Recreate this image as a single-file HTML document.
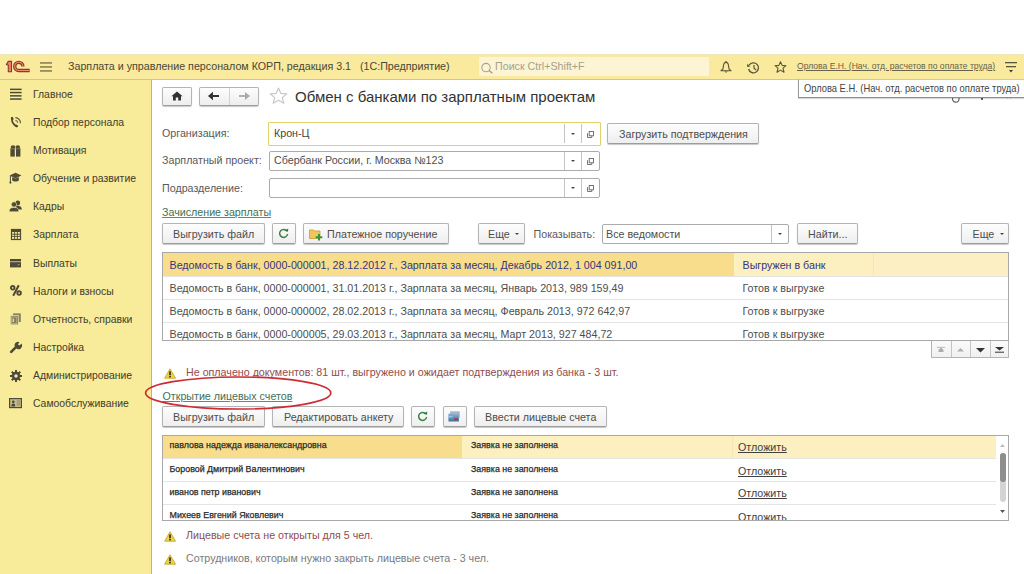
<!DOCTYPE html>
<html><head><meta charset="utf-8">
<style>
*{box-sizing:border-box;margin:0;padding:0}
html,body{width:1024px;height:574px;overflow:hidden;background:#fff}
body{position:relative;font-family:"Liberation Sans",sans-serif;font-size:10.7px;color:#4d4d4d}
.a{position:absolute;white-space:nowrap;line-height:1}
#top{position:absolute;left:0;top:54px;width:1024px;height:26px;background:#f9ea9e;border-top:1px solid #ede5bb;border-bottom:1px solid #d6c67e}
#side{position:absolute;left:0;top:80px;width:152px;height:494px;background:#f8ec9b;border-right:1px solid #beb37c}
.si{position:absolute;left:33px;font-size:10.4px;color:#45422f;line-height:1;white-space:nowrap;-webkit-text-stroke:0.05px #45422f}
svg{position:absolute;overflow:visible}
.btn{position:absolute;border:1px solid #b4b4b4;border-bottom-color:#9c9c9c;border-radius:2px;background:linear-gradient(#fdfdfd,#eeeeee);box-shadow:0 1px 1px rgba(0,0,0,.22)}
.bt{position:absolute;line-height:1;white-space:nowrap;color:#4d4d4d}
.inp{position:absolute;border:1px solid #ababab;border-radius:2px;background:#fff}
.lbl{position:absolute;line-height:1;white-space:nowrap;color:#595959}
.tbl{position:absolute;border:1px solid #a8a8a8;background:#fff;overflow:hidden}
.ln{position:absolute;height:1px;background:#e4e4e4}
.warn{position:absolute;line-height:1;white-space:nowrap;color:#914c4c}
.lnk{position:absolute;line-height:1;white-space:nowrap;color:#3f6f58;text-decoration:underline;text-decoration-color:#3f9f6c}
.b8{position:absolute;line-height:1;white-space:nowrap;color:#2a2a2a;font-size:8.9px;-webkit-text-stroke:0.25px #2a2a2a}
.otl{position:absolute;line-height:1;white-space:nowrap;color:#404040;text-decoration:underline}
</style></head><body>

<!-- ===== TOP BAR ===== -->
<div id="top"></div>
<!-- 1C logo -->
<svg style="left:6px;top:61px" width="24" height="12" viewBox="0 0 24 12">
  <path d="M0.5 3.4 L2.3 0.4 L5.5 0.4 L5.5 10.8 L2.3 10.8 L2.3 4.2 Z" fill="#f08070" stroke="#8c3a22" stroke-width="1.1"/>
  <path d="M16.9 5.4 A4.1 4.1 0 1 0 12.8 9.5 L23.7 9.5" fill="none" stroke="#8c3a22" stroke-width="3.3"/>
  <path d="M16.9 5.4 A4.1 4.1 0 1 0 12.8 9.5 L23.7 9.5" fill="none" stroke="#f08a78" stroke-width="1.1"/>
</svg>
<!-- hamburger -->
<svg style="left:40px;top:62px" width="12" height="10" viewBox="0 0 12 10">
  <rect x="0" y="0.3" width="12" height="1.3" fill="#6f6a45"/>
  <rect x="0" y="4.3" width="12" height="1.3" fill="#6f6a45"/>
  <rect x="0" y="8.3" width="12" height="1.3" fill="#6f6a45"/>
</svg>
<div class="a" style="left:68px;top:61px;color:#4a4736">Зарплата и управление персоналом КОРП, редакция 3.1</div>
<div class="a" style="left:360px;top:61px;color:#4a4736">(1С:Предприятие)</div>
<!-- search -->
<div style="position:absolute;left:479px;top:57px;width:230px;height:19px;background:#fcf4d4"></div>
<svg style="left:481px;top:62.5px" width="12" height="10" viewBox="0 0 12 10">
  <circle cx="5" cy="4.6" r="4.2" fill="none" stroke="#a9a488" stroke-width="1.1"/>
  <path d="M8 7.6 L11.4 10.2" stroke="#a9a488" stroke-width="1.5"/>
</svg>
<div class="a" style="left:495px;top:61px;color:#a5a18a">Поиск Ctrl+Shift+F</div>
<!-- bell -->
<svg style="left:719.5px;top:61px" width="12" height="12" viewBox="0 0 12 12">
  <path d="M6 1.4 C4.3 1.4 3.6 3.2 3.4 5.2 L3 7.8 L1 9.7 L11 9.7 L9 7.8 L8.6 5.2 C8.4 3.2 7.7 1.4 6 1.4 Z" fill="none" stroke="#5a5438" stroke-width="1.1" stroke-linejoin="round"/>
  <circle cx="6" cy="0.9" r="0.8" fill="#5a5438"/>
  <path d="M4.4 10.6 Q6 12.4 7.6 10.6 Z" fill="#4a4530"/>
</svg>
<!-- history -->
<svg style="left:747px;top:62px" width="13" height="12" viewBox="0 0 13 12">
  <path d="M2.2 3.2 A5 5 0 1 1 1.6 7" fill="none" stroke="#5a563e" stroke-width="1.3"/>
  <path d="M0.2 1.8 L3.4 4.4 L0.2 5 Z" fill="#5a563e"/>
  <path d="M7 3 L7 6.3 L9.2 8" fill="none" stroke="#5a563e" stroke-width="1.2"/>
</svg>
<!-- star top -->
<svg style="left:774px;top:61px" width="13" height="12" viewBox="0 0 13 12">
  <path d="M6.5 0.8 L8.1 4.4 L12 4.7 L9 7.2 L10 11.2 L6.5 9.1 L3 11.2 L4 7.2 L1 4.7 L4.9 4.4 Z" fill="none" stroke="#5a563e" stroke-width="1.1" stroke-linejoin="round"/>
</svg>
<div class="a" style="left:797px;top:62px;font-size:8.6px;color:#67624a;text-decoration:underline">Орлова Е.Н. (Нач. отд. расчетов по оплате труда)</div>
<!-- menu icon -->
<svg style="left:1005px;top:62px" width="12" height="11" viewBox="0 0 12 11">
  <rect x="0" y="0" width="12" height="1.3" fill="#5a563e"/>
  <rect x="1" y="4" width="10" height="1.3" fill="#5a563e"/>
  <path d="M4 8 L8 8 L6 10.5 Z" fill="#3b3a2e"/>
</svg>

<!-- ===== SIDEBAR ===== -->
<div id="side"></div>
<div class="si" style="top:90px">Главное</div>
<div class="si" style="top:118px">Подбор персонала</div>
<div class="si" style="top:146px">Мотивация</div>
<div class="si" style="top:174px">Обучение и развитие</div>
<div class="si" style="top:202px">Кадры</div>
<div class="si" style="top:230px">Зарплата</div>
<div class="si" style="top:258.5px">Выплаты</div>
<div class="si" style="top:286.5px">Налоги и взносы</div>
<div class="si" style="top:314.5px">Отчетность, справки</div>
<div class="si" style="top:342.5px">Настройка</div>
<div class="si" style="top:370.5px">Администрирование</div>
<div class="si" style="top:398.5px">Самообслуживание</div>
<!-- sidebar icons -->
<svg style="left:10px;top:88px" width="12" height="12" viewBox="0 0 12 12">
  <rect x="0" y="0.6" width="11.6" height="1.5" fill="#4e4a36"/>
  <rect x="0" y="3.8" width="11.6" height="1.5" fill="#4e4a36"/>
  <rect x="0" y="7.1" width="11.6" height="1.5" fill="#4e4a36"/>
  <rect x="0" y="10.3" width="11.6" height="1.5" fill="#4e4a36"/>
</svg>
<svg style="left:10px;top:116px" width="12" height="12" viewBox="0 0 12 12">
  <path d="M2 2 Q1.2 7.6 6.8 10.4" fill="none" stroke="#4e4a36" stroke-width="1.6" stroke-linecap="round"/>
  <ellipse cx="2.2" cy="2.6" rx="1.3" ry="1.6" fill="#4e4a36" transform="rotate(-20 2.2 2.6)"/>
  <ellipse cx="6.4" cy="9.8" rx="1.7" ry="1.2" fill="#4e4a36" transform="rotate(20 6.4 9.8)"/>
  <path d="M5.4 1.6 A5.2 5.2 0 0 1 10.4 7.2" fill="none" stroke="#5a5640" stroke-width="1.2"/>
  <path d="M5.4 4.2 A2.6 2.6 0 0 1 7.6 6.6" fill="none" stroke="#5a5640" stroke-width="1.1"/>
</svg>
<svg style="left:10px;top:144.5px" width="11" height="12" viewBox="0 0 11 12">
  <g fill="#4e4a36">
  <ellipse cx="3" cy="1.9" rx="2.3" ry="1.7"/><ellipse cx="7.8" cy="1.9" rx="2.3" ry="1.7"/>
  <rect x="0.4" y="3.2" width="4.4" height="8.4"/><rect x="6" y="3.2" width="4.4" height="8.4"/>
  </g>
  <rect x="0.4" y="3.6" width="10" height="0.6" fill="#8a8460"/>
</svg>
<svg style="left:9px;top:172px" width="13" height="12" viewBox="0 0 13 12">
  <path d="M0.5 3.5 L6.5 0.8 L12.5 3.5 L6.5 6.2 Z" fill="#4e4a36"/>
  <path d="M3.2 5 L3.2 8.4 C4.6 9.8 8.4 9.8 9.8 8.4 L9.8 5 L6.5 6.6 Z" fill="#4e4a36"/>
  <path d="M1.4 4 L1.4 10" stroke="#4e4a36" stroke-width="1"/>
  <circle cx="1.4" cy="10.6" r="1.1" fill="#4e4a36"/>
</svg>
<svg style="left:9px;top:200px" width="13" height="12" viewBox="0 0 13 12">
  <circle cx="8.8" cy="3" r="2.4" fill="#4e4a36"/>
  <path d="M6.4 6.4 C7.8 5.6 10 5.6 11.4 6.4 C12.6 7.2 12.8 8.6 12.8 9.6 L9 9.6 Z" fill="#4e4a36"/>
  <circle cx="5" cy="4.4" r="2.6" fill="#4e4a36" stroke="#f8ec9b" stroke-width="0.6"/>
  <path d="M0.2 11.8 C0.2 8.6 1.6 7.4 5 7.4 C8.4 7.4 9.8 8.6 9.8 11.8 Z" fill="#4e4a36" stroke="#f8ec9b" stroke-width="0.6"/>
</svg>
<svg style="left:10.5px;top:229px" width="10" height="11" viewBox="0 0 10 11">
  <rect x="0.5" y="0.5" width="9" height="10" fill="none" stroke="#4e4a36" stroke-width="1.2"/>
  <rect x="1" y="1" width="8" height="2" fill="#4e4a36"/>
  <path d="M1 5.2 H9 M1 7.4 H9 M3.6 3 V10 M6.4 3 V10" stroke="#4e4a36" stroke-width="0.9"/>
</svg>
<svg style="left:10px;top:258.5px" width="11" height="9" viewBox="0 0 11 9">
  <rect x="0" y="0" width="11" height="8.4" fill="#4e4a36"/>
  <rect x="0" y="2" width="11" height="1.3" fill="#a8a080"/>
  <rect x="7.6" y="5.2" width="2" height="1" fill="#a8a080"/>
</svg>
<svg style="left:10px;top:285px" width="12" height="11" viewBox="0 0 12 11">
  <circle cx="2.7" cy="2.8" r="1.8" fill="none" stroke="#4e4a36" stroke-width="1.9"/>
  <circle cx="9.1" cy="8.1" r="1.8" fill="none" stroke="#4e4a36" stroke-width="1.9"/>
  <path d="M8.8 0.3 L3.2 10.7" stroke="#4e4a36" stroke-width="2"/>
</svg>
<svg style="left:10px;top:312.5px" width="11" height="12" viewBox="0 0 11 12">
  <rect x="3" y="0.4" width="7.8" height="8.6" fill="#858062"/>
  <rect x="0.3" y="2.6" width="8" height="9.2" fill="#858062" stroke="#f8ec9b" stroke-width="0.7"/>
  <rect x="1.6" y="4" width="5.2" height="6.4" fill="none" stroke="#bdb58c" stroke-width="0.8"/>
  <rect x="2.6" y="5.6" width="1.4" height="3.4" fill="#e0d8b0"/>
</svg>
<svg style="left:9.5px;top:340.5px" width="13" height="12" viewBox="0 0 13 12">
  <path d="M1.2 10.8 L6.2 5.8" stroke="#4e4a36" stroke-width="2.6" stroke-linecap="round"/>
  <path d="M5.2 6.6 A3.6 3.6 0 0 1 9.4 1 L8 3.4 L9.6 4.6 L11.4 2.6 A3.6 3.6 0 0 1 6.4 7.6 Z" fill="#4e4a36"/>
</svg>
<svg style="left:10px;top:370px" width="12" height="12" viewBox="0 0 12 12">
  <g fill="#4e4a36">
  <circle cx="6" cy="6" r="4.2"/>
  <rect x="5" y="0" width="2" height="12"/>
  <rect x="0" y="5" width="12" height="2"/>
  <rect x="5" y="0" width="2" height="12" transform="rotate(45 6 6)"/>
  <rect x="5" y="0" width="2" height="12" transform="rotate(-45 6 6)"/>
  </g>
  <circle cx="6" cy="6" r="1.8" fill="#e8e2c0"/>
</svg>
<svg style="left:9px;top:398px" width="13" height="10" viewBox="0 0 13 10">
  <rect x="0.6" y="0.6" width="11.8" height="9" fill="#c9bf8e" stroke="#4e4a36" stroke-width="1.2"/>
  <path d="M2.4 8.5 C2.4 6 3 5.4 4.3 5.4 C5.6 5.4 6.2 6 6.2 8.5 Z" fill="#4e4a36"/>
  <circle cx="4.3" cy="3.8" r="1.4" fill="#4e4a36"/>
  <path d="M7.6 3 H11 M7.6 5 H11 M7.6 7 H11" stroke="#7c7656" stroke-width="0.8"/>
</svg>

<!-- ===== CONTENT HEADER ===== -->
<div class="btn" style="left:162px;top:87px;width:30px;height:19px"></div>
<svg style="left:171px;top:91px" width="12" height="10" viewBox="0 0 12 10">
  <path d="M6 0.4 L11.6 5.2 L10 5.2 L10 9.6 L7.2 9.6 L7.2 6.6 L4.8 6.6 L4.8 9.6 L2 9.6 L2 5.2 L0.4 5.2 Z" fill="#333"/>
</svg>
<div class="btn" style="left:199px;top:87px;width:60px;height:19px"></div>
<div style="position:absolute;left:228.5px;top:88px;width:1px;height:17px;background:#d2d2d2"></div>
<svg style="left:208px;top:91px" width="12" height="10" viewBox="0 0 12 10">
  <path d="M1 5 H11" stroke="#333" stroke-width="2"/><path d="M0 5 L5 0.8 L5 9.2 Z" fill="#333"/>
</svg>
<svg style="left:238px;top:91px" width="12" height="10" viewBox="0 0 12 10">
  <path d="M1 5 H10" stroke="#aaa" stroke-width="1.8"/><path d="M12 5 L7 1 L7 9 Z" fill="#aaa"/>
</svg>
<svg style="left:269px;top:87px" width="19" height="17" viewBox="0 0 19 17">
  <path d="M9.5 1 L11.9 6.4 L17.8 6.8 L13.3 10.6 L14.8 16.3 L9.5 13.2 L4.2 16.3 L5.7 10.6 L1.2 6.8 L7.1 6.4 Z" fill="none" stroke="#c8c8c8" stroke-width="1.2" stroke-linejoin="round"/>
</svg>
<div class="a" style="left:295px;top:89px;font-size:15px;color:#333">Обмен с банками по зарплатным проектам</div>
<!-- hidden icons under tooltip -->
<svg style="left:951.5px;top:94px" width="8" height="8" viewBox="0 0 8 8">
  <path d="M7 4.2 A3.3 3.3 0 1 1 0.6 4" fill="none" stroke="#666" stroke-width="1.2"/>
</svg>
<div style="position:absolute;left:981px;top:98px;width:2px;height:2px;background:#666"></div>
<svg style="left:1004.5px;top:95px" width="8" height="5" viewBox="0 0 8 5">
  <path d="M0.6 0 L3 3 M7.4 0 L5 3" stroke="#666" stroke-width="1.3"/>
</svg>

<!-- ===== FORM FIELDS ===== -->
<div class="lbl" style="left:162px;top:128px">Организация:</div>
<div class="lbl" style="left:162px;top:155px">Зарплатный проект:</div>
<div class="lbl" style="left:162px;top:182.5px">Подразделение:</div>

<div class="inp" style="left:267.5px;top:121.6px;width:333.5px;height:24px;border:1.8px solid #e2d06a;border-radius:1px"></div>
<div class="a" style="left:274px;top:128px;color:#444">Крон-Ц</div>
<div class="inp" style="left:269px;top:151px;width:331px;height:20px"></div>
<div class="a" style="left:274px;top:155px;color:#4d4d4d">Сбербанк России, г. Москва №123</div>
<div class="inp" style="left:269px;top:178px;width:331px;height:20px"></div>

<!-- separators + icons for inputs -->
<div style="position:absolute;left:564px;top:124px;width:1px;height:19px;background:#c4c4c4"></div>
<div style="position:absolute;left:581px;top:124px;width:1px;height:19px;background:#c4c4c4"></div>
<div style="position:absolute;left:564px;top:152px;width:1px;height:18px;background:#c4c4c4"></div>
<div style="position:absolute;left:581px;top:152px;width:1px;height:18px;background:#c4c4c4"></div>
<div style="position:absolute;left:564px;top:179px;width:1px;height:18px;background:#c4c4c4"></div>
<div style="position:absolute;left:581px;top:179px;width:1px;height:18px;background:#c4c4c4"></div>
<svg style="left:570.5px;top:132.5px" width="4" height="2" viewBox="0 0 4 2"><path d="M0 0 H4 L2 2 Z" fill="#444"/></svg>
<svg style="left:570.5px;top:160px" width="4" height="2" viewBox="0 0 4 2"><path d="M0 0 H4 L2 2 Z" fill="#444"/></svg>
<svg style="left:570.5px;top:187px" width="4" height="2" viewBox="0 0 4 2"><path d="M0 0 H4 L2 2 Z" fill="#444"/></svg>
<svg style="left:587px;top:130.5px" width="7" height="7" viewBox="0 0 7 7"><path d="M0.5 2.2 V6.5 H4.8 V4.8" fill="none" stroke="#666" stroke-width="0.9"/><rect x="2.2" y="0.5" width="4.3" height="4.3" fill="none" stroke="#666" stroke-width="0.9"/></svg>
<svg style="left:587px;top:158.0px" width="7" height="7" viewBox="0 0 7 7"><path d="M0.5 2.2 V6.5 H4.8 V4.8" fill="none" stroke="#666" stroke-width="0.9"/><rect x="2.2" y="0.5" width="4.3" height="4.3" fill="none" stroke="#666" stroke-width="0.9"/></svg>
<svg style="left:587px;top:185.0px" width="7" height="7" viewBox="0 0 7 7"><path d="M0.5 2.2 V6.5 H4.8 V4.8" fill="none" stroke="#666" stroke-width="0.9"/><rect x="2.2" y="0.5" width="4.3" height="4.3" fill="none" stroke="#666" stroke-width="0.9"/></svg>

<div class="btn" style="left:607px;top:123px;width:152px;height:21px"></div>
<div class="bt" style="left:619px;top:129px">Загрузить подтверждения</div>

<div class="lnk" style="left:162px;top:207.4px">Зачисление зарплаты</div>

<!-- ===== TOOLBAR 1 ===== -->
<div class="btn" style="left:162px;top:223px;width:103px;height:20.8px"></div>
<div class="bt" style="left:173px;top:228.5px">Выгрузить файл</div>
<div class="btn" style="left:272px;top:223px;width:24px;height:20.8px"></div>
<svg style="left:277.9px;top:228.2px" width="12" height="11" viewBox="0 0 12 11">
  <path d="M9 3.2 A4 4 0 1 0 9.6 6" fill="none" stroke="#3b8446" stroke-width="1.5"/>
  <path d="M6.8 2.8 L10 3.8 L10.2 0.6 Z" fill="#2e7a3a"/>
</svg>
<div class="btn" style="left:303px;top:223px;width:146px;height:20.8px"></div>
<svg style="left:309px;top:228px" width="14" height="13" viewBox="0 0 14 13">
  <path d="M0.5 2 H4.5 L5.5 3 H11 V10.5 H0.5 Z" fill="#f0c65a" stroke="#c79a36" stroke-width="0.8"/>
  <path d="M10 6 V12.6 M6.7 9.3 H13.3" stroke="#2f9a3a" stroke-width="2"/>
</svg>
<div class="bt" style="left:327px;top:228.5px">Платежное поручение</div>
<div class="btn" style="left:477.5px;top:223px;width:47px;height:20.8px"></div>
<div class="bt" style="left:488px;top:228.5px">Еще</div>
<svg style="left:515px;top:233px" width="4" height="2" viewBox="0 0 4 2"><path d="M0 0 H4 L2 2 Z" fill="#444"/></svg>
<div class="lbl" style="left:533.5px;top:228.5px">Показывать:</div>
<div class="inp" style="left:602px;top:224px;width:187px;height:20px"></div>
<div class="a" style="left:606px;top:228.5px;color:#4d4d4d">Все ведомости</div>
<div style="position:absolute;left:771px;top:225px;width:1px;height:18px;background:#c4c4c4"></div>
<svg style="left:777.5px;top:233px" width="4" height="2" viewBox="0 0 4 2"><path d="M0 0 H4 L2 2 Z" fill="#444"/></svg>
<div class="btn" style="left:796.5px;top:223px;width:61px;height:20.8px"></div>
<div class="bt" style="left:808px;top:228.5px">Найти...</div>
<div class="btn" style="left:961px;top:223px;width:48px;height:20.8px"></div>
<div class="bt" style="left:972.5px;top:228.5px">Еще</div>
<svg style="left:999.5px;top:233px" width="4" height="2" viewBox="0 0 4 2"><path d="M0 0 H4 L2 2 Z" fill="#444"/></svg>

<!-- ===== TABLE 1 ===== -->
<div class="tbl" style="left:162px;top:252px;width:847px;height:89px">
  <div style="position:absolute;left:0;top:0;width:571px;height:22.5px;background:#f8de8c"></div>
  <div style="position:absolute;left:571px;top:0;width:140px;height:22.5px;background:#fcefc0"></div>
  <div style="position:absolute;left:711px;top:0;width:140px;height:22.5px;background:#fcefc4"></div>
  <div style="position:absolute;left:710px;top:0;width:1px;height:22.5px;background:#f4e6b6"></div>
  <div class="ln" style="left:0;right:0;top:22.5px"></div>
  <div class="ln" style="left:0;right:0;top:45.8px"></div>
  <div class="ln" style="left:0;right:0;top:69.3px"></div>
</div>
<div class="a" style="left:169.5px;top:259.5px;color:#353580">Ведомость в банк, 0000-000001, 28.12.2012 г., Зарплата за месяц, Декабрь 2012, 1 004 091,00</div>
<div class="a" style="left:742.5px;top:259.5px;color:#353580">Выгружен в банк</div>
<div class="a" style="left:169.5px;top:282.5px">Ведомость в банк, 0000-000001, 31.01.2013 г., Зарплата за месяц, Январь 2013, 989 159,49</div>
<div class="a" style="left:742.5px;top:282.5px">Готов к выгрузке</div>
<div class="a" style="left:169.5px;top:305.7px">Ведомость в банк, 0000-000002, 28.02.2013 г., Зарплата за месяц, Февраль 2013, 972 642,97</div>
<div class="a" style="left:742.5px;top:305.7px">Готов к выгрузке</div>
<div style="position:absolute;left:163px;top:323px;width:845px;height:18px;overflow:hidden">
  <div class="a" style="left:6.5px;top:5.7px">Ведомость в банк, 0000-000005, 29.03.2013 г., Зарплата за месяц, Март 2013, 927 484,72</div>
  <div class="a" style="left:579.5px;top:5.7px">Готов к выгрузке</div>
</div>
<!-- nav buttons -->
<div style="position:absolute;left:931px;top:341px;width:78px;height:16.5px;border:1px solid #b4b4b4;border-top:none;background:linear-gradient(#fafafa,#f0f0f0)"></div>
<div style="position:absolute;left:950.5px;top:341px;width:1px;height:16px;background:#c4c4c4"></div>
<div style="position:absolute;left:970px;top:341px;width:1px;height:16px;background:#c4c4c4"></div>
<div style="position:absolute;left:989.5px;top:341px;width:1px;height:16px;background:#c4c4c4"></div>
<svg style="left:937px;top:347px" width="8" height="5" viewBox="0 0 8 5"><path d="M0 0.4 H8" stroke="#aaa" stroke-width="0.8"/><path d="M4 0.8 L7.2 3.6 L0.8 3.6 Z M4 2.4 L7.2 5 L0.8 5 Z" fill="#aaa"/></svg>
<svg style="left:956.5px;top:348px" width="7" height="4" viewBox="0 0 7 4"><path d="M3.5 0 L7 3.4 L0 3.4 Z" fill="#b0b0b0"/></svg>
<svg style="left:975.5px;top:347.5px" width="9" height="5" viewBox="0 0 9 5"><path d="M0 0 H9 L4.5 4.4 Z" fill="#333"/></svg>
<svg style="left:995px;top:347px" width="9" height="6" viewBox="0 0 9 6"><path d="M0 0 H9 L4.5 3.6 Z" fill="#333"/><path d="M0 5.2 H9" stroke="#333" stroke-width="1"/></svg>

<!-- ===== WARNING 1 ===== -->
<svg style="left:163.5px;top:368px" width="12" height="11" viewBox="0 0 12 11">
  <path d="M6 0.8 L11.6 10.2 L0.6 10.2 Z" fill="#ecd23c" stroke="#c9b43e" stroke-width="1" stroke-linejoin="round"/>
  <rect x="5.1" y="3.4" width="1.8" height="3.8" fill="#3d3a22"/><rect x="5.1" y="7.9" width="1.8" height="1.5" fill="#3d3a22"/>
</svg>
<div class="warn" style="left:186px;top:367px">Не оплачено документов: 81 шт., выгружено и ожидает подтверждения из банка - 3 шт.</div>
<div class="lnk" style="left:162.5px;top:390.5px">Открытие лицевых счетов</div>


<!-- ===== TOOLBAR 2 ===== -->
<div class="btn" style="left:162px;top:406px;width:103px;height:20.7px"></div>
<div class="bt" style="left:173px;top:411.5px">Выгрузить файл</div>
<div class="btn" style="left:272px;top:406px;width:132px;height:20.7px"></div>
<div class="bt" style="left:284px;top:411.5px">Редактировать анкету</div>
<div class="btn" style="left:411px;top:406px;width:24px;height:20.7px"></div>
<svg style="left:416.9px;top:411.4px" width="12" height="11" viewBox="0 0 12 11">
  <path d="M9 3.2 A4 4 0 1 0 9.6 6" fill="none" stroke="#3b8446" stroke-width="1.5"/>
  <path d="M6.8 2.8 L10 3.8 L10.2 0.6 Z" fill="#2e7a3a"/>
</svg>
<div class="btn" style="left:442.5px;top:406px;width:24px;height:20.7px"></div>
<svg style="left:448px;top:411px" width="13" height="11" viewBox="0 0 13 11">
  <defs><linearGradient id="cg" x1="0" y1="0" x2="0" y2="1"><stop offset="0" stop-color="#8ab4d8"/><stop offset="1" stop-color="#3f73a8"/></linearGradient></defs>
  <rect x="2" y="0.3" width="9.8" height="6.5" rx="0.6" fill="#a9b8c4"/>
  <rect x="0.4" y="2.6" width="10.6" height="7.8" rx="0.6" fill="url(#cg)"/>
  <rect x="0.4" y="5.3" width="4" height="1" fill="#b8d4ec"/>
  <rect x="6.2" y="7" width="3.6" height="2.4" fill="#9a4646"/>
</svg>
<div class="btn" style="left:473.5px;top:406px;width:133px;height:20.7px"></div>
<div class="bt" style="left:485px;top:411.5px">Ввести лицевые счета</div>

<!-- ===== TABLE 2 ===== -->
<div class="tbl" style="left:162px;top:434.5px;width:847px;height:86px">
  <div style="position:absolute;left:0;top:0;width:299px;height:22.5px;background:#f8de8c"></div>
  <div style="position:absolute;left:299px;top:0;width:534px;height:22.5px;background:#fcefc0"></div>
  <div style="position:absolute;left:569px;top:0;width:1px;height:22.5px;background:#f4e6b6"></div>
  <div class="ln" style="left:0;width:833px;top:22.5px"></div>
  <div class="ln" style="left:0;width:833px;top:45.5px"></div>
  <div class="ln" style="left:0;width:833px;top:68.2px"></div>
  <!-- scrollbar -->
  <div style="position:absolute;left:837px;top:17px;width:6px;height:49px;border-radius:3px;background:#d4d4d4"></div>
  <div style="position:absolute;left:837px;top:17px;width:6px;height:29px;border-radius:3px;background:#8e8e8e"></div>
  <svg style="left:836.5px;top:8px" width="5" height="3" viewBox="0 0 5 3"><path d="M2.5 0 L5 3 L0 3 Z" fill="#bbb"/></svg>
  <svg style="left:836.5px;top:74px" width="5" height="3" viewBox="0 0 5 3"><path d="M0 0 H5 L2.5 3 Z" fill="#555"/></svg>
</div>
<div class="b8" style="left:169.5px;top:441px">павлова надежда иваналександровна</div>
<div class="b8" style="left:471px;top:441px">Заявка не заполнена</div>
<div class="otl" style="left:738px;top:442px">Отложить</div>
<div class="b8" style="left:169.5px;top:464.5px">Боровой Дмитрий Валентинович</div>
<div class="b8" style="left:471px;top:464.5px">Заявка не заполнена</div>
<div class="otl" style="left:738px;top:465.5px">Отложить</div>
<div class="b8" style="left:169.5px;top:487.5px">иванов петр иванович</div>
<div class="b8" style="left:471px;top:487.5px">Заявка не заполнена</div>
<div class="otl" style="left:738px;top:488px">Отложить</div>
<div style="position:absolute;left:163px;top:504.5px;width:832px;height:15px;overflow:hidden">
  <div class="b8" style="left:6.5px;top:6.5px">Михеев Евгений Яковлевич</div>
  <div class="b8" style="left:308px;top:6.5px">Заявка не заполнена</div>
  <div class="otl" style="left:575px;top:7px">Отложить</div>
</div>

<!-- ===== WARNINGS 2,3 ===== -->
<svg style="left:163.5px;top:530.5px" width="12" height="11" viewBox="0 0 12 11">
  <path d="M6 0.8 L11.6 10.2 L0.6 10.2 Z" fill="#ecd23c" stroke="#c9b43e" stroke-width="1" stroke-linejoin="round"/>
  <rect x="5.1" y="3.4" width="1.8" height="3.8" fill="#3d3a22"/><rect x="5.1" y="7.9" width="1.8" height="1.5" fill="#3d3a22"/>
</svg>
<div class="warn" style="left:186px;top:529.6px">Лицевые счета не открыты для 5 чел.</div>
<svg style="left:163.5px;top:553.5px" width="12" height="11" viewBox="0 0 12 11">
  <path d="M6 0.8 L11.6 10.2 L0.6 10.2 Z" fill="#ecd23c" stroke="#c9b43e" stroke-width="1" stroke-linejoin="round"/>
  <rect x="5.1" y="3.4" width="1.8" height="3.8" fill="#3d3a22"/><rect x="5.1" y="7.9" width="1.8" height="1.5" fill="#3d3a22"/>
</svg>
<div class="a" style="left:186px;top:553px;color:#7a7a7a">Сотрудников, которым нужно закрыть лицевые счета - 3 чел.</div>

<!-- ===== TOOLTIP ===== -->
<div style="position:absolute;left:798px;top:79px;width:240px;height:18.6px;background:#fff;border:1px solid #9a9a9a;border-top:1px solid #c8c8c8;border-bottom:1.6px solid #8c8c8c;box-shadow:0 1px 1px rgba(0,0,0,.15)"></div>
<div class="a" style="left:803.5px;top:82.5px;font-size:11px;color:#444;transform-origin:0 0;transform:scaleX(0.85)">Орлова Е.Н. (Нач. отд. расчетов по оплате труда)</div>

<svg style="left:0;top:0" width="1024" height="574" viewBox="0 0 1024 574">
  <ellipse cx="238.2" cy="393" rx="92.6" ry="16" fill="none" stroke="#cf2b33" stroke-width="1.7"/>
</svg>
</body></html>
